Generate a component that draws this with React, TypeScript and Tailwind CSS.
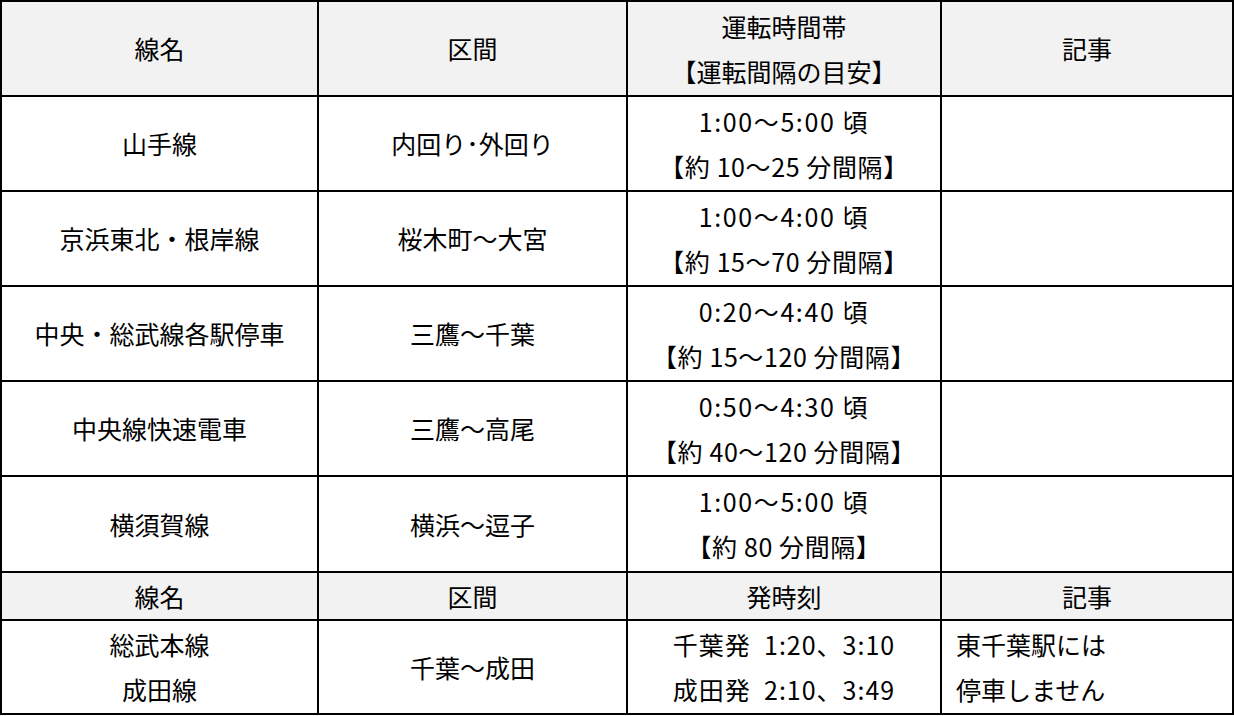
const font = "font-['Noto_Sans_CJK_JP','Noto_Sans',sans-serif]"

type Row = {
  line: string
  section: string
  hours: string
  interval: string
  h: string
}

const rows: Row[] = [
  { line: "山手線", section: "内回り･外回り", hours: "1:00～5:00 頃", interval: "【約 10～25 分間隔】", h: "h-[95px]" },
  { line: "京浜東北・根岸線", section: "桜木町～大宮", hours: "1:00～4:00 頃", interval: "【約 15～70 分間隔】", h: "h-[95px]" },
  { line: "中央・総武線各駅停車", section: "三鷹～千葉", hours: "0:20～4:40 頃", interval: "【約 15～120 分間隔】", h: "h-[95px]" },
  { line: "中央線快速電車", section: "三鷹～高尾", hours: "0:50～4:30 頃", interval: "【約 40～120 分間隔】", h: "h-[95px]" },
  { line: "横須賀線", section: "横浜～逗子", hours: "1:00～5:00 頃", interval: "【約 80 分間隔】", h: "h-[96px]" },
]

const cell = "border-r-2 border-b-2 border-black p-0 text-center align-middle"
const head = cell + " bg-[#f2f2f2] font-normal"

export default function App() {
  return (
    <div className={`min-h-screen w-[1234px] bg-white text-black ${font}`}>
      <table className="w-[1234px] table-fixed border-separate border-spacing-0 border-l-2 border-t-2 border-black text-[25px] leading-[45px]">
        <colgroup>
          <col className="w-[317px]" />
          <col className="w-[309px]" />
          <col className="w-[314px]" />
          <col className="w-[292px]" />
        </colgroup>
        <thead>
          <tr className="h-[95px]">
            <th className={head}>線名</th>
            <th className={head}>区間</th>
            <th className={head}>
              <div>運転時間帯</div>
              <div>【運転間隔の目安】</div>
            </th>
            <th className={head}>記事</th>
          </tr>
        </thead>
        <tbody>
          {rows.map((row) => (
            <tr key={row.line} className={row.h}>
              <td className={cell}>{row.line}</td>
              <td className={cell}>{row.section}</td>
              <td className={cell}>
                <div className="tracking-[1.6px]">{row.hours}</div>
                <div className="tracking-[0.6px]">{row.interval}</div>
              </td>
              <td className={cell}></td>
            </tr>
          ))}
          <tr className="h-[48px]">
            <td className={head}>線名</td>
            <td className={head}>区間</td>
            <td className={head}>発時刻</td>
            <td className={head}>記事</td>
          </tr>
          <tr className="h-[94px]">
            <td className={cell}>
              <div>総武本線</div>
              <div>成田線</div>
            </td>
            <td className={cell}>千葉～成田</td>
            <td className={cell}>
              <div className="tracking-[1px]">千葉発&nbsp;&nbsp;1:20、3:10</div>
              <div className="tracking-[1px]">成田発&nbsp;&nbsp;2:10、3:49</div>
            </td>
            <td className={cell + " !text-left pl-[14px]"}>
              <div>東千葉駅には</div>
              <div>停車しません</div>
            </td>
          </tr>
        </tbody>
      </table>
    </div>
  )
}
